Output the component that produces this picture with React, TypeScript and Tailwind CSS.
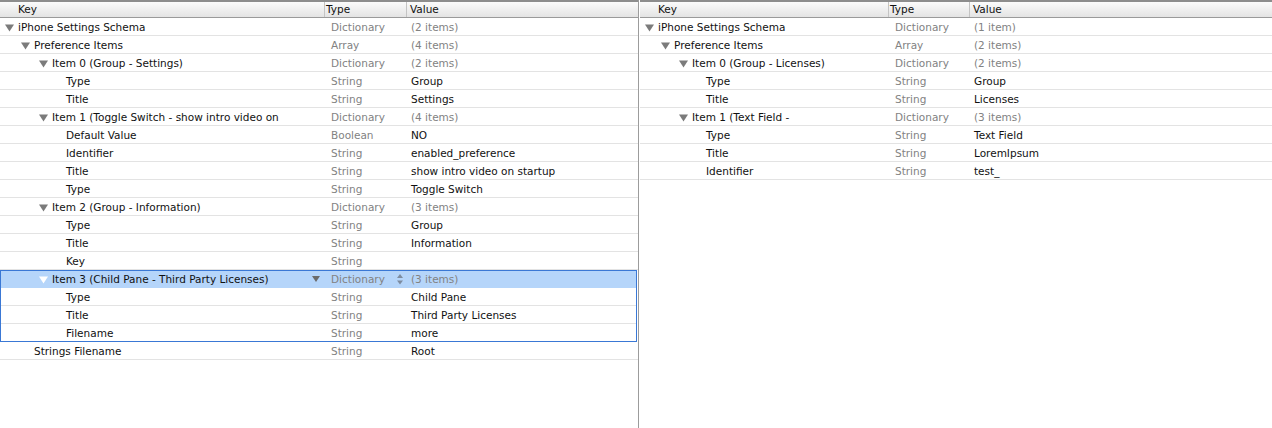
import React from 'react';

interface Row {
  key: string;
  level: number;
  expandable?: boolean;
  type: string;
  value: string;
  dimValue?: boolean;
}

const leftRows: Row[] = [
  { key: 'iPhone Settings Schema', level: 0, expandable: true, type: 'Dictionary', value: '(2 items)', dimValue: true },
  { key: 'Preference Items', level: 1, expandable: true, type: 'Array', value: '(4 items)', dimValue: true },
  { key: 'Item 0 (Group - Settings)', level: 2, expandable: true, type: 'Dictionary', value: '(2 items)', dimValue: true },
  { key: 'Type', level: 3, type: 'String', value: 'Group' },
  { key: 'Title', level: 3, type: 'String', value: 'Settings' },
  { key: 'Item 1 (Toggle Switch - show intro video on', level: 2, expandable: true, type: 'Dictionary', value: '(4 items)', dimValue: true },
  { key: 'Default Value', level: 3, type: 'Boolean', value: 'NO' },
  { key: 'Identifier', level: 3, type: 'String', value: 'enabled_preference' },
  { key: 'Title', level: 3, type: 'String', value: 'show intro video on startup' },
  { key: 'Type', level: 3, type: 'String', value: 'Toggle Switch' },
  { key: 'Item 2 (Group - Information)', level: 2, expandable: true, type: 'Dictionary', value: '(3 items)', dimValue: true },
  { key: 'Type', level: 3, type: 'String', value: 'Group' },
  { key: 'Title', level: 3, type: 'String', value: 'Information' },
  { key: 'Key', level: 3, type: 'String', value: '' },
];

const selectedRow: Row = {
  key: 'Item 3 (Child Pane - Third Party Licenses)', level: 2, expandable: true, type: 'Dictionary', value: '(3 items)', dimValue: true,
};

const selectedChildren: Row[] = [
  { key: 'Type', level: 3, type: 'String', value: 'Child Pane' },
  { key: 'Title', level: 3, type: 'String', value: 'Third Party Licenses' },
  { key: 'Filename', level: 3, type: 'String', value: 'more' },
];

const leftTail: Row[] = [
  { key: 'Strings Filename', level: 1, type: 'String', value: 'Root' },
];

const rightRows: Row[] = [
  { key: 'iPhone Settings Schema', level: 0, expandable: true, type: 'Dictionary', value: '(1 item)', dimValue: true },
  { key: 'Preference Items', level: 1, expandable: true, type: 'Array', value: '(2 items)', dimValue: true },
  { key: 'Item 0 (Group - Licenses)', level: 2, expandable: true, type: 'Dictionary', value: '(2 items)', dimValue: true },
  { key: 'Type', level: 3, type: 'String', value: 'Group' },
  { key: 'Title', level: 3, type: 'String', value: 'Licenses' },
  { key: 'Item 1 (Text Field -', level: 2, expandable: true, type: 'Dictionary', value: '(3 items)', dimValue: true },
  { key: 'Type', level: 3, type: 'String', value: 'Text Field' },
  { key: 'Title', level: 3, type: 'String', value: 'LoremIpsum' },
  { key: 'Identifier', level: 3, type: 'String', value: 'test_' },
];

// padding before the disclosure triangle, or before the text when there is none
const triPad = ['pl-[5px]', 'pl-[21px]', 'pl-[39px]', 'pl-[53px]'];
const textPad = ['pl-[18px]', 'pl-[34px]', 'pl-[52px]', 'pl-[66px]'];

const Disclosure = ({ white }: { white?: boolean }) => (
  <svg width="9" height="8" viewBox="0 0 9 8" className="mr-[4px] shrink-0">
    <path d="M0 0.5 L9 0.5 L4.5 7.5 Z" fill={white ? '#ffffff' : '#7b7b7b'} />
  </svg>
);

interface Cols {
  key: string;
  type: string;
}

const TreeRow = ({ row, cols, selected }: { row: Row; cols: Cols; selected?: boolean }) => (
  <div
    className={`flex h-[18px] items-center border-b ${
      selected ? 'bg-[#b5d5fa] border-[#b5d5fa]' : 'border-[#e3e3e3]'
    }`}
  >
    <div
      className={`${cols.key} flex items-center h-full translate-y-px ${
        row.expandable ? triPad[row.level] : textPad[row.level]
      } relative`}
    >
      {row.expandable && <Disclosure white={selected} />}
      <span className="whitespace-nowrap text-[#111]">{row.key}</span>
      {selected && (
        <svg width="8" height="7" viewBox="0 0 8 7" className="absolute right-[5px] top-[5px]">
          <path d="M0 0 L8 0 L4 6 Z" fill="#6b6b6b" />
        </svg>
      )}
    </div>
    <div className={`${cols.type} flex items-center h-full translate-y-px pl-[6px] text-[#828282] relative`}>
      <span className="whitespace-nowrap">{row.type}</span>
      {selected && (
        <svg width="6" height="11" viewBox="0 0 6 11" className="absolute right-[4px] top-[3px]">
          <path d="M0 4 L6 4 L3 0 Z" fill="#7d8ca0" />
          <path d="M0 6.5 L6 6.5 L3 10.5 Z" fill="#7d8ca0" />
        </svg>
      )}
    </div>
    <div
      className={`flex-1 flex items-center h-full translate-y-px pl-[4px] ${
        row.dimValue ? 'text-[#828282]' : 'text-[#111]'
      }`}
    >
      <span className="whitespace-nowrap">{row.value}</span>
    </div>
  </div>
);

const Header = ({ cols, keyPad }: { cols: Cols; keyPad: string }) => (
  <div className="flex h-[18px] items-center border-t-2 border-t-[#8d8d8d] border-b border-b-[#9a9a9a] bg-gradient-to-b from-[#fbfbfb] to-[#e4e4e4] text-[#111]">
    <div className={`${cols.key} h-full flex items-center ${keyPad} border-r border-[#c4c4c4]`}>Key</div>
    <div className={`${cols.type} h-full flex items-center pl-[1px] border-r border-[#c4c4c4]`}>Type</div>
    <div className="flex-1 h-full flex items-center pl-[3px]">Value</div>
  </div>
);

export default function App() {
  const leftCols = { key: 'w-[325px] shrink-0', type: 'w-[82px] shrink-0' };
  const rightCols = { key: 'w-[249px] shrink-0', type: 'w-[81px] shrink-0' };

  return (
    <div
      className="flex w-[1272px] h-[428px] bg-white overflow-hidden"
      style={{ fontFamily: '"DejaVu Sans", sans-serif', fontSize: '10.5px' }}
    >
      <div className="w-[638px] shrink-0 flex flex-col">
        <Header cols={leftCols} keyPad="pl-[18px]" />
        {leftRows.map((r, i) => (
          <TreeRow key={i} row={r} cols={leftCols} />
        ))}
        <div className="outline outline-1 -outline-offset-1 outline-[#3a78d5] mr-px">
          <TreeRow row={selectedRow} cols={leftCols} selected />
          {selectedChildren.map((r, i) => (
            <TreeRow key={i} row={r} cols={leftCols} />
          ))}
        </div>
        {leftTail.map((r, i) => (
          <TreeRow key={i} row={r} cols={leftCols} />
        ))}
      </div>
      <div className="w-px bg-[#9c9c9c] shrink-0" />
      <div className="flex-1 flex flex-col pl-px">
        <Header cols={rightCols} keyPad="pl-[18px]" />
        {rightRows.map((r, i) => (
          <TreeRow key={i} row={r} cols={rightCols} />
        ))}
      </div>
    </div>
  );
}
